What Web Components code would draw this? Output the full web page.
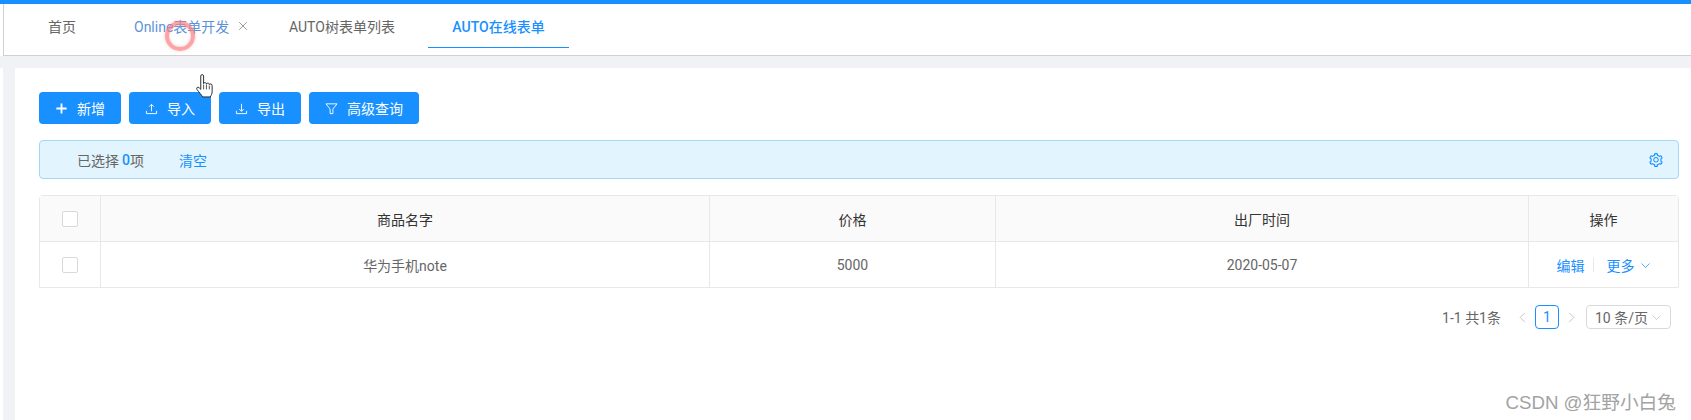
<!DOCTYPE html>
<html>
<head>
<meta charset="utf-8">
<style>
  html, body { margin: 0; height: 420px; overflow: hidden; background: #fff; }
  body { font-family: "Roboto", "Noto Sans CJK SC", sans-serif; font-size: 14px; color: #666; }
</style>
</head>
<body>
<app-page></app-page>

<script>
const ICONS = {
  plus: '<path d="M7 1.500v11M1.500 7h11" stroke-width="2"/>',
  upload: '<path d="M7 10V2.500M4.500 5L7 2.500 9.500 5M1.500 9.500v3h11v-3"/>',
  download: '<path d="M7 2v8M4.500 7.500L7 10l2.500-2.500M1.500 9.500v3h11v-3"/>',
  filter: '<path d="M1 2h12L8.500 7.500V12.500H5.500V7.500z"/>',
  close: '<path d="M2.500 2.500l9 9M11.500 2.500l-9 9"/>',
  down: '<path d="M2 4.500l5 5 5-5"/>',
  left: '<path d="M9.500 2l-5 5 5 5"/>',
  right: '<path d="M4.500 2l5 5-5 5"/>',
  gear: '<g transform="scale(.015625) translate(-64 -64)" fill="currentColor" stroke="none"><path d="M924.8 625.7l-65.5-56c3.1-19 4.7-38.4 4.7-57.8s-1.6-38.8-4.7-57.8l65.5-56a32.03 32.03 0 0 0 9.3-35.2l-.9-2.6a443.74 443.74 0 0 0-79.7-137.9l-1.8-2.1a32.12 32.12 0 0 0-35.1-9.5l-81.3 28.9c-30-24.6-63.5-44-99.7-57.6l-15.7-85a32.05 32.05 0 0 0-25.8-25.7l-2.7-.5c-52.1-9.4-106.9-9.4-159 0l-2.7.5a32.05 32.05 0 0 0-25.8 25.7l-15.8 85.4a351.86 351.86 0 0 0-99 57.4l-81.9-29.1a32 32 0 0 0-35.1 9.5l-1.8 2.1a446.02 446.02 0 0 0-79.7 137.9l-.9 2.6c-4.5 12.5-.8 26.5 9.3 35.2l66.3 56.6c-3.1 18.8-4.6 38-4.6 57.1 0 19.2 1.5 38.4 4.6 57.1L99 625.5a32.03 32.03 0 0 0-9.3 35.2l.9 2.6c18.1 50.4 44.9 96.9 79.7 137.9l1.8 2.1a32.12 32.12 0 0 0 35.1 9.5l81.9-29.1c29.8 24.5 63.1 43.9 99 57.4l15.8 85.4a32.05 32.05 0 0 0 25.8 25.7l2.7.5a449.4 449.4 0 0 0 159 0l2.7-.5a32.05 32.05 0 0 0 25.8-25.7l15.7-85a350 350 0 0 0 99.7-57.6l81.3 28.9a32 32 0 0 0 35.1-9.5l1.8-2.1c34.8-41.1 61.6-87.5 79.7-137.9l.9-2.6c4.5-12.3.8-26.3-9.3-35zM788.3 465.9c2.5 15.1 3.8 30.6 3.8 46.1s-1.3 31-3.8 46.1l-6.6 40.1 74.7 63.9a370.03 370.03 0 0 1-42.6 73.6L721 702.8l-31.4 25.8c-23.9 19.6-50.5 35-79.3 45.8l-38.1 14.3-17.9 97a377.5 377.5 0 0 1-85 0l-17.9-97.2-37.8-14.5c-28.5-10.8-55-26.2-78.7-45.7l-31.4-25.9-93.4 33.2c-17-22.9-31.2-47.6-42.6-73.6l75.5-64.5-6.5-40c-2.4-14.9-3.7-30.3-3.7-45.5 0-15.3 1.2-30.6 3.7-45.5l6.5-40-75.5-64.5c11.3-26.1 25.6-50.7 42.6-73.6l93.4 33.2 31.4-25.9c23.7-19.5 50.2-34.9 78.7-45.7l37.9-14.3 17.9-97.2c28.1-3.2 56.8-3.2 85 0l17.9 97 38.1 14.3c28.7 10.8 55.4 26.2 79.3 45.8l31.4 25.8 92.8-32.9c17 22.9 31.2 47.6 42.6 73.6L781.8 426l6.5 39.9zM512 326c-97.2 0-176 78.8-176 176s78.8 176 176 176 176-78.8 176-176-78.8-176-176-176zm79.2 255.2A111.6 111.6 0 0 1 512 614c-29.9 0-58-11.7-79.2-32.8A111.6 111.6 0 0 1 400 502c0-29.9 11.7-58 32.8-79.2C454 401.6 482.1 390 512 390c29.9 0 58 11.6 79.2 32.8A111.6 111.6 0 0 1 624 502c0 29.9-11.7 58-32.8 79.2z"/></g>'
};

class AppIcon extends HTMLElement {
  connectedCallback() {
    const size = this.getAttribute('size') || 14;
    this.attachShadow({ mode: 'open' }).innerHTML = `
      <style>:host { display: inline-flex; } svg { display: block; }</style>
      <svg width="${size}" height="${size}" viewBox="0 0 14 14" fill="none" stroke="currentColor" stroke-width="1">${ICONS[this.getAttribute('name')]}</svg>`;
  }
}
customElements.define('app-icon', AppIcon);

class TabBar extends HTMLElement {
  connectedCallback() {
    this.attachShadow({ mode: 'open' }).innerHTML = `
      <style>
        :host { display: flex; height: 51px; margin-left: 3px; border-left: 1px solid #d0d0d0; border-bottom: 1px solid #d0d0d0; background: #fff; font-size: 14px; color: #666; }
        .tab { display: flex; align-items: center; gap: 8px; height: 44px; box-sizing: border-box; white-space: nowrap; }
        .home { margin-left: 44px; width: 86px; }
        .online { color: #5b93d8; width: 155px; }
        .online app-icon { color: #8c8c8c; }
        .tree { width: 139px; }
        .active { width: 141px; justify-content: center; color: #1890ff; font-weight: 500; border-bottom: 1px solid #1890ff; }
      </style>
      <div class="tab home">首页</div>
      <div class="tab online">Online表单开发<app-icon name="close" size="12"></app-icon></div>
      <div class="tab tree">AUTO树表单列表</div>
      <div class="tab active">AUTO在线表单</div>`;
  }
}
customElements.define('tab-bar', TabBar);

class BlueButton extends HTMLElement {
  connectedCallback() {
    this.attachShadow({ mode: 'open' }).innerHTML = `
      <style>
        :host { display: inline-flex; align-items: center; gap: 9px; height: 32px; padding: 0 16px; box-sizing: border-box; background: #1890ff; color: #fff; border-radius: 4px; font-size: 14px; }
      </style>
      <app-icon name="${this.getAttribute('icon')}" size="13"></app-icon><slot></slot>`;
  }
}
customElements.define('blue-button', BlueButton);

class InfoBar extends HTMLElement {
  connectedCallback() {
    this.attachShadow({ mode: 'open' }).innerHTML = `
      <style>
        :host { display: flex; align-items: center; height: 39px; box-sizing: border-box; padding: 0 15px 0 37px; background: #e2f4fd; border: 1px solid #a6d8f5; border-radius: 4px; font-size: 14px; color: #666; }
        b { font-weight: 500; color: #1890ff; margin-left: 3px; }
        a { color: #1890ff; margin-left: 35px; }
        app-icon { margin-left: auto; color: #1890ff; }
      </style>
      已选择<b>0</b>项<a>清空</a><app-icon name="gear" size="14"></app-icon>`;
  }
}
customElements.define('info-bar', InfoBar);

class CheckBox extends HTMLElement {
  connectedCallback() {
    this.attachShadow({ mode: 'open' }).innerHTML = `
      <style>:host { display: block; width: 16px; height: 16px; box-sizing: border-box; border: 1px solid #d9d9d9; border-radius: 2px; background: #fff; }</style>`;
  }
}
customElements.define('check-box', CheckBox);

class DataTable extends HTMLElement {
  connectedCallback() {
    this.attachShadow({ mode: 'open' }).innerHTML = `
      <style>
        :host { display: grid; grid-template-columns: 61px 609px 286px 533px 1fr; grid-template-rows: 46px 45px; box-sizing: border-box; border: 1px solid #e8e8e8; border-radius: 4px 4px 0 0; font-size: 14px; color: #666; }
        div { display: flex; align-items: center; justify-content: center; border-right: 1px solid #e8e8e8; }
        .last { border-right: 0; }
        .head { background: #fafafa; color: #333; border-bottom: 1px solid #e8e8e8; }
        .cell { padding-top: 1px; box-sizing: border-box; }
        a { color: #1890ff; display: inline-flex; align-items: center; gap: 5px; }
        i { width: 1px; height: 14px; background: #e8e8e8; margin: 0 13px 0 8px; }
      </style>
      <div class="head"><check-box></check-box></div>
      <div class="head">商品名字</div>
      <div class="head">价格</div>
      <div class="head">出厂时间</div>
      <div class="head last">操作</div>
      <div><check-box></check-box></div>
      <div class="cell">华为手机note</div>
      <div class="cell">5000</div>
      <div class="cell">2020-05-07</div>
      <div class="cell last"><a>编辑</a><i></i><a>更多<app-icon name="down" size="11"></app-icon></a></div>`;
  }
}
customElements.define('data-table', DataTable);

class PagerBar extends HTMLElement {
  connectedCallback() {
    this.attachShadow({ mode: 'open' }).innerHTML = `
      <style>
        :host { display: flex; align-items: center; justify-content: flex-end; height: 24px; padding-right: 8px; font-size: 14px; color: #666; }
        .arrow { display: flex; color: #bfbfbf; }
        .total { margin-right: 15px; }
        .page { width: 24px; height: 24px; margin: 0 6px; box-sizing: border-box; border: 1px solid #1890ff; border-radius: 4px; color: #1890ff; display: flex; align-items: center; justify-content: center; }
        .select { margin-left: 8px; width: 85px; height: 24px; box-sizing: border-box; border: 1px solid #d9d9d9; border-radius: 4px; display: flex; align-items: center; justify-content: space-between; padding: 0 8px; white-space: nowrap; }
        .select app-icon { color: #bfbfbf; }
      </style>
      <span class="total">1-1 共1条</span>
      <span class="arrow"><app-icon name="left" size="13"></app-icon></span>
      <span class="page">1</span>
      <span class="arrow"><app-icon name="right" size="13"></app-icon></span>
      <span class="select">10 条/页<app-icon name="down" size="11"></app-icon></span>`;
  }
}
customElements.define('pager-bar', PagerBar);

// click marker and hand cursor from the screen recording
class RecordingOverlay extends HTMLElement {
  connectedCallback() {
    this.attachShadow({ mode: 'open' }).innerHTML = `
      <style>
        :host { position: absolute; left: 0; top: 0; width: 0; height: 0; }
        .ring { position: absolute; left: 165px; top: 17px; width: 22px; height: 22px; border: 4px solid rgba(250, 125, 130, .7); border-radius: 50%; box-shadow: 0 0 3px rgba(250,125,130,.5), inset 0 0 3px rgba(250,125,130,.5); }
        svg { position: absolute; left: 196px; top: 70px; }
      </style>
      <div class="ring"></div>
      <svg width="19" height="25" viewBox="0 0 20 26"><path d="M5 2c0-2 3-2 3 0v8c0-1.500 3-1.500 3 .5 0-1.500 3-1.500 3 .5 0-1.200 3-1 3 1v6c0 3-1 4-2 6H7c-1-2-4-5-6-8-1-2 1-3 2.500-1.500L5 16z" fill="#fff" stroke="#222" stroke-width="1"/><path d="M8 11v5M11 11v5M14 12v4" stroke="#222" stroke-width=".8" fill="none"/></svg>`;
  }
}
customElements.define('recording-overlay', RecordingOverlay);

class AppPage extends HTMLElement {
  connectedCallback() {
    this.attachShadow({ mode: 'open' }).innerHTML = `
      <style>
        :host { display: block; position: relative; height: 420px; border-top: 4px solid #1890ff; box-sizing: border-box; overflow: hidden; }
        .body { display: flex; padding-left: 3px; background: linear-gradient(#f0f2f5 12px, transparent 12px); }
        .gutter { width: 12px; height: 364px; background: #f0f2f5; flex: none; }
        .main { flex: 1; margin-top: 12px; padding: 24px 12px 0 24px; background: #fff; height: 352px; box-sizing: border-box; }
        .tools { display: flex; gap: 8px; margin-bottom: 16px; }
        info-bar { margin-bottom: 16px; }
        pager-bar { margin-top: 17px; }
        .mark { position: absolute; right: 15px; bottom: 5px; font-family: "Liberation Sans", "Noto Sans CJK SC", sans-serif; font-size: 18.7px; line-height: 24px; color: #a3a3a3; }
      </style>
      <tab-bar></tab-bar>
      <div class="body">
        <div class="gutter"></div>
        <div class="main">
          <div class="tools">
            <blue-button icon="plus">新增</blue-button>
            <blue-button icon="upload">导入</blue-button>
            <blue-button icon="download">导出</blue-button>
            <blue-button icon="filter">高级查询</blue-button>
          </div>
          <info-bar></info-bar>
          <data-table></data-table>
          <pager-bar></pager-bar>
        </div>
      </div>
      <recording-overlay></recording-overlay>
      <div class="mark">CSDN @狂野小白兔</div>`;
  }
}
customElements.define('app-page', AppPage);
</script>
</body>
</html>
